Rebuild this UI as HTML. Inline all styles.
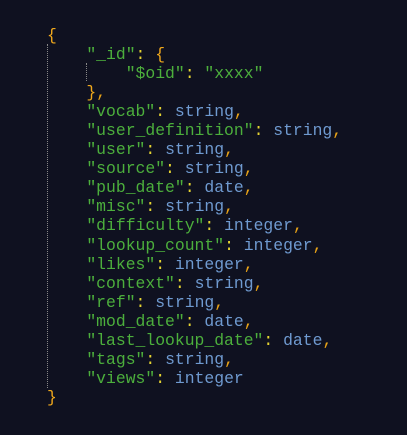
<!DOCTYPE html><html><head><style>
html,body{margin:0;background:#0f1120;width:407px;height:435px;overflow:hidden}
pre{position:absolute;left:47px;top:26px;margin:0;font-family:"Courier New","Nimbus Mono PS","Nimbus Mono L","FreeMono","Liberation Mono",monospace;font-size:16.4px;line-height:19.05px;color:#4caf3c}
.b{color:#f0a81c}.c{color:#e6d431}.t{color:#6f9ad0}.k{color:#e8a317}
.g{position:absolute;border-left:1px dotted #888;width:0}
</style></head><body>
<div class="g" style="left:47px;top:44px;height:344px"></div>
<div class="g" style="left:86px;top:63px;height:18px"></div>
<pre><span class="b">{</span>
    "_id"<span class="c">:</span> <span class="b">{</span>
        "$oid"<span class="c">:</span> "xxxx"
    <span class="b">}</span><span class="k">,</span>
    "vocab"<span class="c">:</span> <span class="t">string</span><span class="k">,</span>
    "user_definition"<span class="c">:</span> <span class="t">string</span><span class="k">,</span>
    "user"<span class="c">:</span> <span class="t">string</span><span class="k">,</span>
    "source"<span class="c">:</span> <span class="t">string</span><span class="k">,</span>
    "pub_date"<span class="c">:</span> <span class="t">date</span><span class="k">,</span>
    "misc"<span class="c">:</span> <span class="t">string</span><span class="k">,</span>
    "difficulty"<span class="c">:</span> <span class="t">integer</span><span class="k">,</span>
    "lookup_count"<span class="c">:</span> <span class="t">integer</span><span class="k">,</span>
    "likes"<span class="c">:</span> <span class="t">integer</span><span class="k">,</span>
    "context"<span class="c">:</span> <span class="t">string</span><span class="k">,</span>
    "ref"<span class="c">:</span> <span class="t">string</span><span class="k">,</span>
    "mod_date"<span class="c">:</span> <span class="t">date</span><span class="k">,</span>
    "last_lookup_date"<span class="c">:</span> <span class="t">date</span><span class="k">,</span>
    "tags"<span class="c">:</span> <span class="t">string</span><span class="k">,</span>
    "views"<span class="c">:</span> <span class="t">integer</span>
<span class="b">}</span></pre>
</body></html>
